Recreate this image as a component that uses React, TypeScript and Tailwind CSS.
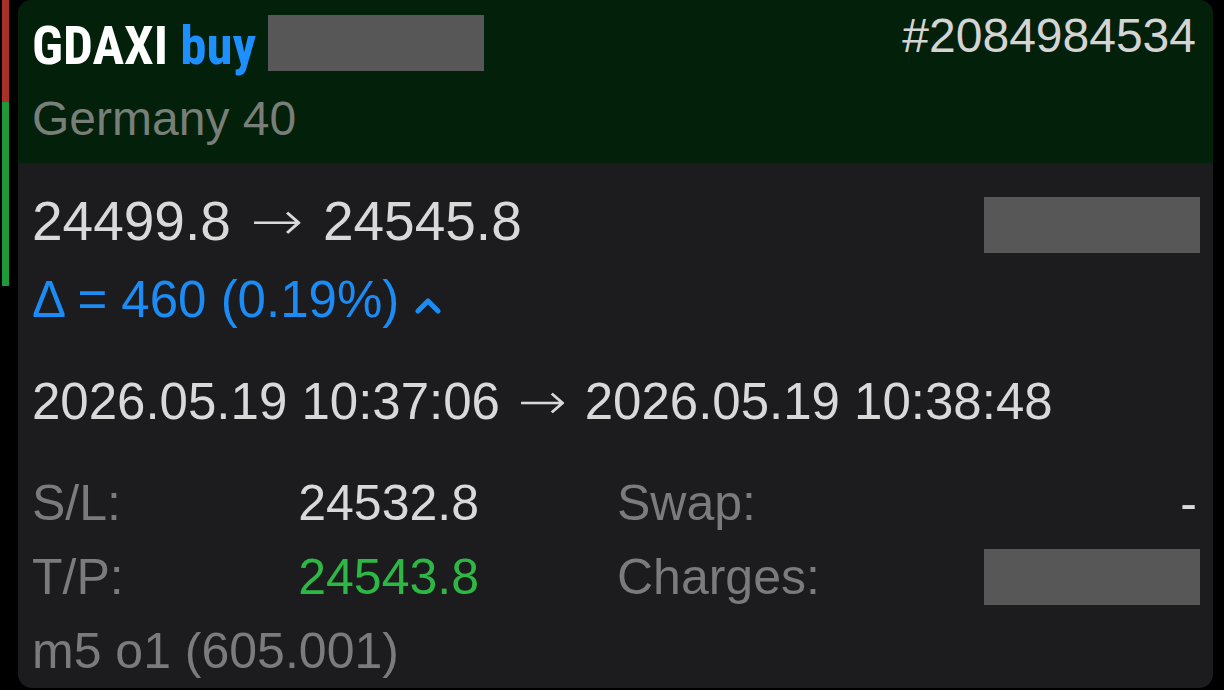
import React from 'react';

const sans = { fontFamily: '"Liberation Sans", Arial, sans-serif' };
const arrowFont = { fontFamily: '"DejaVu Sans", sans-serif', fontWeight: 200 };

function Arrow({ gap = 'mx-[9px]' }: { gap?: string }) {
  return (
    <span className={`inline-block scale-x-[1.15] ${gap}`} style={arrowFont}>
      →
    </span>
  );
}

function Redacted({ className = '' }: { className?: string }) {
  return <div className={`bg-[#575757] w-[216px] h-[56px] ${className}`} />;
}

function Chevron() {
  return (
    <svg width="26" height="18" viewBox="0 0 26 18" className="ml-[16px] mt-[10px]">
      <polyline
        points="3,15 13,5 23,15"
        fill="none"
        stroke="#1b8cf5"
        strokeWidth="5"
        strokeLinecap="round"
        strokeLinejoin="round"
      />
    </svg>
  );
}

function InfoRow({
  label,
  value,
  valueClass = 'text-[#d9d9d9]',
  rightLabel,
  right,
}: {
  label: string;
  value: string;
  valueClass?: string;
  rightLabel: string;
  right: React.ReactNode;
}) {
  return (
    <div className="flex items-center h-[74px] text-[50px] leading-[74px]">
      <div className="w-[447px] flex justify-between">
        <span className="text-[#7b7b7b]">{label}</span>
        <span className={valueClass}>{value}</span>
      </div>
      <div className="ml-[138px] flex-1 flex items-center justify-between">
        <span className="text-[#7b7b7b]">{rightLabel}</span>
        {right}
      </div>
    </div>
  );
}

export default function App() {
  return (
    <div className="w-[1224px] h-[690px] bg-black flex overflow-hidden" style={sans}>
      {/* side indicator */}
      <div className="w-[18px] pl-[2px] flex flex-col">
        <div className="w-[7px] h-[102px] bg-[#a9302a]" />
        <div className="w-[7px] h-[184px] bg-[#1f9a38]" />
      </div>

      <div className="w-[1195px] h-[688px] rounded-[14px] bg-[#1c1c1e] overflow-hidden flex flex-col">
        {/* Header */}
        <div className="h-[163px] bg-[#03200a] pl-[14px] pr-[17px] pt-[15px] flex justify-between items-start">
          <div className="flex flex-col">
            <div className="flex items-start">
              <span
                className="text-[53px] leading-[63px] font-bold text-white"
                style={{ fontFamily: '"Liberation Sans Narrow", "Roboto Condensed", Roboto, sans-serif' }}
              >
                GDAXI <span className="text-[#1e8fff]">buy</span>
              </span>
              <Redacted className="ml-[12px]" />
            </div>
            <span className="text-[48px] leading-[81px] text-[#787e78]">Germany 40</span>
          </div>
          <span className="text-[48px] leading-[42px] text-[#d4d4d4]">#2084984534</span>
        </div>

        {/* Body */}
        <div className="pl-[14px] pr-[13px] pt-[21px] flex flex-col">
          <div className="flex justify-between items-start">
            <span className="text-[55px] leading-[74px] text-[#d9d9d9] whitespace-nowrap">
              24499.8<Arrow gap="mx-[23px]" />24545.8
            </span>
            <Redacted className="mt-[13px]" />
          </div>
          <div className="flex items-center mt-[5px] h-[74px] text-[51px] leading-[74px] text-[#1b8cf5]">
            <span>Δ = 460 (0.19%)</span>
            <Chevron />
          </div>
          <div className="mt-[28px] h-[74px] text-[51px] leading-[74px] text-[#d9d9d9] whitespace-nowrap">
            2026.05.19 10:37:06<Arrow gap="mx-[21px]" />2026.05.19 10:38:48
          </div>
          <div className="mt-[27px]">
            <InfoRow
              label="S/L:"
              value="24532.8"
              rightLabel="Swap:"
              right={<span className="text-[#d9d9d9] pr-[3px]">-</span>}
            />
            <InfoRow
              label="T/P:"
              value="24543.8"
              valueClass="text-[#2db845]"
              rightLabel="Charges:"
              right={<Redacted />}
            />
            <div className="h-[74px] text-[50px] leading-[74px] text-[#7b7b7b]">m5 o1 (605.001)</div>
          </div>
        </div>
      </div>
    </div>
  );
}
